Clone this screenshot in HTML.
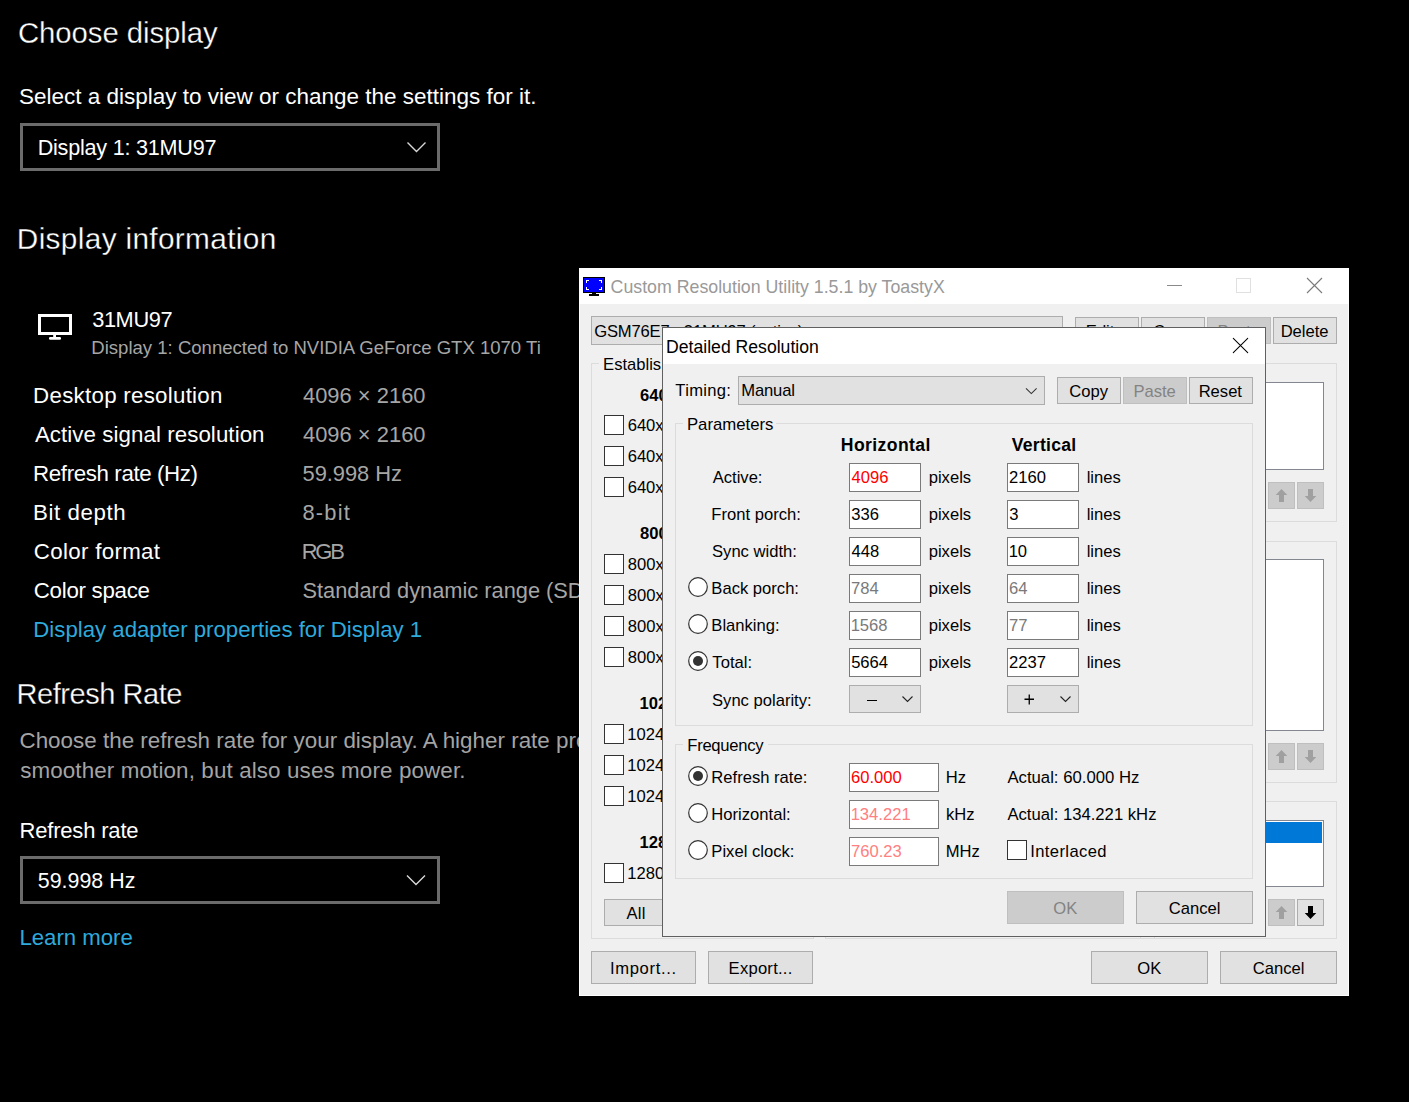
<!DOCTYPE html>
<html><head><meta charset="utf-8"><title>Display settings</title>
<style>
html,body{margin:0;padding:0;}
body{width:1409px;height:1102px;background:#000;position:relative;overflow:hidden;font-family:"Liberation Sans",sans-serif;}
.t{position:absolute;white-space:pre;}
.r{position:absolute;}
</style></head><body>
<div class="t" style="left:17.93px;top:18px;font-size:29.30px;line-height:29.30px;color:#ffffff;font-weight:400;-webkit-text-stroke:0.3px #000;letter-spacing:-0.044px;">Choose display</div>
<div class="t" style="left:19.10px;top:86px;font-size:22.49px;line-height:22.49px;color:#ffffff;font-weight:400;">Select a display to view or change the settings for it.</div>
<div class="r" style="left:20px;top:123px;width:420px;height:48px;border:3px solid #6b6b6b;box-sizing:border-box;"></div>
<div class="t" style="left:37.67px;top:137px;font-size:21.60px;line-height:21.60px;color:#ffffff;font-weight:400;letter-spacing:-0.229px;">Display 1: 31MU97</div>
<svg class="r" style="left:404px;top:139px" width="24" height="16"><polyline points="3.5,3.5 12.5,12.5 21.5,3.5" fill="none" stroke="#d8d8d8" stroke-width="1.4"/></svg>
<div class="t" style="left:16.82px;top:224px;font-size:29.80px;line-height:29.80px;color:#ffffff;font-weight:400;-webkit-text-stroke:0.3px #000;letter-spacing:0.336px;">Display information</div>
<svg class="r" style="left:38px;top:314px" width="36" height="28"><path d="M0 0 H34 V21 H0 Z M3 3 V18 H31 V3 Z" fill="#fff" fill-rule="evenodd"/><rect x="15.2" y="20.5" width="2.8" height="3" fill="#fff"/><rect x="11" y="23.1" width="12" height="2.6" rx="1.2" fill="#fff"/></svg>
<div class="t" style="left:92.15px;top:309px;font-size:21.80px;line-height:21.80px;color:#ffffff;font-weight:400;letter-spacing:-0.388px;">31MU97</div>
<div class="t" style="left:91.32px;top:339px;font-size:18.56px;line-height:18.56px;color:#a6a6a6;font-weight:400;">Display 1: Connected to NVIDIA GeForce GTX 1070 Ti</div>
<div class="t" style="left:33.12px;top:385px;font-size:22.30px;line-height:22.30px;color:#ffffff;font-weight:400;letter-spacing:0.273px;">Desktop resolution</div>
<div class="t" style="left:302.96px;top:385px;font-size:21.90px;line-height:21.90px;color:#a6a6a6;font-weight:400;letter-spacing:0.023px;">4096 × 2160</div>
<div class="t" style="left:34.90px;top:424px;font-size:22.30px;line-height:22.30px;color:#ffffff;font-weight:400;letter-spacing:0.069px;">Active signal resolution</div>
<div class="t" style="left:302.96px;top:424px;font-size:21.90px;line-height:21.90px;color:#a6a6a6;font-weight:400;letter-spacing:0.023px;">4096 × 2160</div>
<div class="t" style="left:33.12px;top:463px;font-size:22.30px;line-height:22.30px;color:#ffffff;font-weight:400;letter-spacing:-0.378px;">Refresh rate (Hz)</div>
<div class="t" style="left:302.52px;top:463px;font-size:21.90px;line-height:21.90px;color:#a6a6a6;font-weight:400;letter-spacing:-0.060px;">59.998 Hz</div>
<div class="t" style="left:33.12px;top:502px;font-size:22.30px;line-height:22.30px;color:#ffffff;font-weight:400;letter-spacing:0.552px;">Bit depth</div>
<div class="t" style="left:302.52px;top:502px;font-size:21.90px;line-height:21.90px;color:#a6a6a6;font-weight:400;letter-spacing:1.182px;">8-bit</div>
<div class="t" style="left:33.78px;top:541px;font-size:22.30px;line-height:22.30px;color:#ffffff;font-weight:400;letter-spacing:0.326px;">Color format</div>
<div class="t" style="left:301.65px;top:541px;font-size:21.90px;line-height:21.90px;color:#a6a6a6;font-weight:400;letter-spacing:-2.138px;">RGB</div>
<div class="t" style="left:33.78px;top:580px;font-size:22.30px;line-height:22.30px;color:#ffffff;font-weight:400;letter-spacing:-0.277px;">Color space</div>
<div class="t" style="left:302.53px;top:580px;font-size:21.80px;line-height:21.80px;color:#a6a6a6;font-weight:400;">Standard dynamic range (SDR)</div>
<div class="t" style="left:33.32px;top:619px;font-size:22.20px;line-height:22.20px;color:#2eaadc;font-weight:400;letter-spacing:0.008px;">Display adapter properties for Display 1</div>
<div class="t" style="left:16.58px;top:680px;font-size:29.00px;line-height:29.00px;color:#ffffff;font-weight:400;-webkit-text-stroke:0.3px #000;letter-spacing:-0.453px;">Refresh Rate</div>
<div class="t" style="left:19.48px;top:730px;font-size:22.40px;line-height:22.40px;color:#a4a4a4;font-weight:400;letter-spacing:0.01px;">Choose the refresh rate for your display. A higher rate provides</div>
<div class="t" style="left:20.15px;top:760px;font-size:22.40px;line-height:22.40px;color:#a4a4a4;font-weight:400;letter-spacing:0.116px;">smoother motion, but also uses more power.</div>
<div class="t" style="left:19.44px;top:820px;font-size:22.00px;line-height:22.00px;color:#ffffff;font-weight:400;letter-spacing:-0.173px;">Refresh rate</div>
<div class="r" style="left:20px;top:856px;width:420px;height:48px;border:3px solid #6b6b6b;box-sizing:border-box;"></div>
<div class="t" style="left:37.84px;top:871px;font-size:21.40px;line-height:21.40px;color:#ffffff;font-weight:400;">59.998 Hz</div>
<svg class="r" style="left:403px;top:872px" width="24" height="16"><polyline points="4,3.5 13,12.5 22,3.5" fill="none" stroke="#d8d8d8" stroke-width="1.4"/></svg>
<div class="t" style="left:19.42px;top:927px;font-size:22.20px;line-height:22.20px;color:#2eaadc;font-weight:400;letter-spacing:-0.016px;">Learn more</div>
<div class="r" style="left:579px;top:268px;width:770px;height:728px;background:#f0f0f0;border:1px solid #fcfcfc;box-sizing:border-box;"></div>
<div class="r" style="left:579px;top:268px;width:770px;height:36px;background:#ffffff;"></div>
<svg class="r" style="left:583px;top:277px" width="23" height="20" shape-rendering="crispEdges"><rect x="0" y="0" width="22" height="16" fill="#000"/><rect x="1" y="1" width="20" height="14" fill="#0000ff"/><g fill="#fff"><rect x="3" y="3" width="3" height="1"/><rect x="3" y="3" width="1" height="3"/><rect x="16" y="3" width="3" height="1"/><rect x="18" y="3" width="1" height="3"/><rect x="3" y="12" width="3" height="1"/><rect x="3" y="10" width="1" height="3"/><rect x="16" y="12" width="3" height="1"/><rect x="18" y="10" width="1" height="3"/></g><rect x="9" y="16" width="4" height="2" fill="#000"/><rect x="6" y="17" width="10" height="2" fill="#000"/></svg>
<div class="t" style="left:610.61px;top:279px;font-size:17.76px;line-height:17.76px;color:#999999;font-weight:400;">Custom Resolution Utility 1.5.1 by ToastyX</div>
<div class="r" style="left:1167px;top:285px;width:15px;height:1px;background:#8a8a8a;"></div>
<div class="r" style="left:1236px;top:278px;width:15px;height:15px;border:1px solid #e0e0e0;box-sizing:border-box;"></div>
<svg class="r" style="left:1306px;top:277px" width="17" height="17"><path d="M1 1 L16 16 M16 1 L1 16" stroke="#7a7a7a" stroke-width="1.1"/></svg>
<div class="r" style="left:591px;top:316px;width:472px;height:29px;background:#e1e1e1;border:1px solid #adadad;box-sizing:border-box;"></div>
<div class="t" style="left:594.17px;top:324px;font-size:16.60px;line-height:16.60px;color:#000;font-weight:400;letter-spacing:-0.158px;">GSM76E7 - 31MU97 (active)</div>
<div class="r" style="left:1075px;top:317px;width:64px;height:27px;background:#e1e1e1;border:1px solid #adadad;box-sizing:border-box;"></div>
<div class="t" style="left:1085.84px;top:324px;font-size:16.60px;line-height:16.60px;color:#000;font-weight:400;">Edit...</div>
<div class="r" style="left:1141px;top:317px;width:64px;height:27px;background:#e1e1e1;border:1px solid #adadad;box-sizing:border-box;"></div>
<div class="t" style="left:1153.21px;top:324px;font-size:16.60px;line-height:16.60px;color:#000;font-weight:400;">Copy</div>
<div class="r" style="left:1207px;top:317px;width:64px;height:27px;background:#cccccc;border:1px solid #bfbfbf;box-sizing:border-box;"></div>
<div class="t" style="left:1217.41px;top:324px;font-size:16.60px;line-height:16.60px;color:#838383;font-weight:400;">Paste</div>
<div class="r" style="left:1273px;top:317px;width:64px;height:27px;background:#e1e1e1;border:1px solid #adadad;box-sizing:border-box;"></div>
<div class="t" style="left:1280.64px;top:324px;font-size:16.60px;line-height:16.60px;color:#000;font-weight:400;">Delete</div>
<div class="r" style="left:591px;top:363px;width:223px;height:576px;border:1px solid #dcdcdc;box-sizing:border-box;"></div>
<div class="r" style="left:825px;top:363px;width:330px;height:576px;border:1px solid #dcdcdc;box-sizing:border-box;"></div>
<div class="r" style="left:599px;top:362px;width:80px;height:3px;background:#f0f0f0;"></div>
<div class="t" style="left:603.07px;top:357px;font-size:16.60px;line-height:16.60px;color:#000;font-weight:400;">Established resolutions</div>
<div class="t" style="left:640.00px;top:388px;font-size:16.60px;line-height:16.60px;color:#000;font-weight:700;">640x480</div>
<div class="r" style="left:604px;top:415px;width:20px;height:20px;background:#fff;border:1px solid #333;box-sizing:border-box;"></div>
<div class="t" style="left:627.67px;top:418px;font-size:16.60px;line-height:16.60px;color:#000;font-weight:400;">640x480 @ 60</div>
<div class="r" style="left:604px;top:446px;width:20px;height:20px;background:#fff;border:1px solid #333;box-sizing:border-box;"></div>
<div class="t" style="left:627.67px;top:449px;font-size:16.60px;line-height:16.60px;color:#000;font-weight:400;">640x480 @ 60</div>
<div class="r" style="left:604px;top:477px;width:20px;height:20px;background:#fff;border:1px solid #333;box-sizing:border-box;"></div>
<div class="t" style="left:627.67px;top:480px;font-size:16.60px;line-height:16.60px;color:#000;font-weight:400;">640x480 @ 60</div>
<div class="t" style="left:640.00px;top:526px;font-size:16.60px;line-height:16.60px;color:#000;font-weight:700;">800x600</div>
<div class="r" style="left:604px;top:554px;width:20px;height:20px;background:#fff;border:1px solid #333;box-sizing:border-box;"></div>
<div class="t" style="left:627.84px;top:557px;font-size:16.60px;line-height:16.60px;color:#000;font-weight:400;">800x600 @ 60</div>
<div class="r" style="left:604px;top:585px;width:20px;height:20px;background:#fff;border:1px solid #333;box-sizing:border-box;"></div>
<div class="t" style="left:627.84px;top:588px;font-size:16.60px;line-height:16.60px;color:#000;font-weight:400;">800x600 @ 60</div>
<div class="r" style="left:604px;top:616px;width:20px;height:20px;background:#fff;border:1px solid #333;box-sizing:border-box;"></div>
<div class="t" style="left:627.84px;top:619px;font-size:16.60px;line-height:16.60px;color:#000;font-weight:400;">800x600 @ 60</div>
<div class="r" style="left:604px;top:647px;width:20px;height:20px;background:#fff;border:1px solid #333;box-sizing:border-box;"></div>
<div class="t" style="left:627.84px;top:650px;font-size:16.60px;line-height:16.60px;color:#000;font-weight:400;">800x600 @ 60</div>
<div class="t" style="left:639.50px;top:696px;font-size:16.60px;line-height:16.60px;color:#000;font-weight:700;">1024x768</div>
<div class="r" style="left:604px;top:724px;width:20px;height:20px;background:#fff;border:1px solid #333;box-sizing:border-box;"></div>
<div class="t" style="left:627.34px;top:727px;font-size:16.60px;line-height:16.60px;color:#000;font-weight:400;">1024x768 @ 60</div>
<div class="r" style="left:604px;top:755px;width:20px;height:20px;background:#fff;border:1px solid #333;box-sizing:border-box;"></div>
<div class="t" style="left:627.34px;top:758px;font-size:16.60px;line-height:16.60px;color:#000;font-weight:400;">1024x768 @ 60</div>
<div class="r" style="left:604px;top:786px;width:20px;height:20px;background:#fff;border:1px solid #333;box-sizing:border-box;"></div>
<div class="t" style="left:627.34px;top:789px;font-size:16.60px;line-height:16.60px;color:#000;font-weight:400;">1024x768 @ 60</div>
<div class="t" style="left:639.50px;top:835px;font-size:16.60px;line-height:16.60px;color:#000;font-weight:700;">1280x1024</div>
<div class="r" style="left:604px;top:863px;width:20px;height:20px;background:#fff;border:1px solid #333;box-sizing:border-box;"></div>
<div class="t" style="left:627.34px;top:866px;font-size:16.60px;line-height:16.60px;color:#000;font-weight:400;">1280x1024 @ 60</div>
<div class="r" style="left:604px;top:899px;width:68px;height:27px;background:#e1e1e1;border:1px solid #adadad;box-sizing:border-box;"></div>
<div class="t" style="left:626.40px;top:906px;font-size:16.60px;line-height:16.60px;color:#000;font-weight:400;letter-spacing:0.242px;">All</div>
<div class="r" style="left:1140px;top:363px;width:197px;height:159px;border:1px solid #dcdcdc;box-sizing:border-box;"></div>
<div class="r" style="left:1140px;top:382px;width:184px;height:88px;background:#fff;border:1px solid #828790;box-sizing:border-box;"></div>
<div class="r" style="left:1268px;top:482px;width:27px;height:27px;background:#cccccc;border:1px solid #bfbfbf;box-sizing:border-box;"><svg width="27" height="27" style="position:absolute;left:-1px;top:-1px"><path d="M13.5 7 L19.3 13 H16 V20 H11 V13 H7.7 Z" fill="#a0a0a0"/></svg></div>
<div class="r" style="left:1297px;top:482px;width:27px;height:27px;background:#cccccc;border:1px solid #bfbfbf;box-sizing:border-box;"><svg width="27" height="27" style="position:absolute;left:-1px;top:-1px"><path d="M11 7 H16 V14 H19.3 L13.5 20 L7.7 14 H11 Z" fill="#a0a0a0"/></svg></div>
<div class="r" style="left:1140px;top:541px;width:197px;height:242px;border:1px solid #dcdcdc;box-sizing:border-box;"></div>
<div class="r" style="left:1140px;top:559px;width:184px;height:172px;background:#fff;border:1px solid #828790;box-sizing:border-box;"></div>
<div class="r" style="left:1268px;top:743px;width:27px;height:27px;background:#cccccc;border:1px solid #bfbfbf;box-sizing:border-box;"><svg width="27" height="27" style="position:absolute;left:-1px;top:-1px"><path d="M13.5 7 L19.3 13 H16 V20 H11 V13 H7.7 Z" fill="#a0a0a0"/></svg></div>
<div class="r" style="left:1297px;top:743px;width:27px;height:27px;background:#cccccc;border:1px solid #bfbfbf;box-sizing:border-box;"><svg width="27" height="27" style="position:absolute;left:-1px;top:-1px"><path d="M11 7 H16 V14 H19.3 L13.5 20 L7.7 14 H11 Z" fill="#a0a0a0"/></svg></div>
<div class="r" style="left:1140px;top:801px;width:197px;height:138px;border:1px solid #dcdcdc;box-sizing:border-box;"></div>
<div class="r" style="left:1140px;top:820px;width:184px;height:67px;background:#fff;border:1px solid #828790;box-sizing:border-box;"></div>
<div class="r" style="left:1268px;top:899px;width:27px;height:27px;background:#cccccc;border:1px solid #bfbfbf;box-sizing:border-box;"><svg width="27" height="27" style="position:absolute;left:-1px;top:-1px"><path d="M13.5 7 L19.3 13 H16 V20 H11 V13 H7.7 Z" fill="#a0a0a0"/></svg></div>
<div class="r" style="left:1297px;top:899px;width:27px;height:27px;background:#e1e1e1;border:1px solid #adadad;box-sizing:border-box;"><svg width="27" height="27" style="position:absolute;left:-1px;top:-1px"><path d="M11 7 H16 V14 H19.3 L13.5 20 L7.7 14 H11 Z" fill="#000"/></svg></div>
<div class="r" style="left:1141px;top:822px;width:181px;height:21px;background:#0078d7;"></div>
<div class="r" style="left:591px;top:951px;width:105px;height:33px;background:#e1e1e1;border:1px solid #adadad;box-sizing:border-box;"></div>
<div class="t" style="left:609.91px;top:961px;font-size:16.60px;line-height:16.60px;color:#000;font-weight:400;letter-spacing:0.671px;">Import...</div>
<div class="r" style="left:708px;top:951px;width:105px;height:33px;background:#e1e1e1;border:1px solid #adadad;box-sizing:border-box;"></div>
<div class="t" style="left:728.57px;top:961px;font-size:16.60px;line-height:16.60px;color:#000;font-weight:400;letter-spacing:0.247px;">Export...</div>
<div class="r" style="left:1091px;top:951px;width:117px;height:33px;background:#e1e1e1;border:1px solid #adadad;box-sizing:border-box;"></div>
<div class="t" style="left:1137.23px;top:961px;font-size:16.60px;line-height:16.60px;color:#000;font-weight:400;">OK</div>
<div class="r" style="left:1220px;top:951px;width:117px;height:33px;background:#e1e1e1;border:1px solid #adadad;box-sizing:border-box;"></div>
<div class="t" style="left:1252.76px;top:961px;font-size:16.60px;line-height:16.60px;color:#000;font-weight:400;">Cancel</div>
<div class="r" style="left:662px;top:327px;width:604px;height:610px;background:#f0f0f0;border:1px solid #606060;box-sizing:border-box;"></div>
<div class="r" style="left:663px;top:328px;width:602px;height:36px;background:#fff;"></div>
<div class="t" style="left:666.09px;top:339px;font-size:17.63px;line-height:17.63px;color:#000;font-weight:400;">Detailed Resolution</div>
<svg class="r" style="left:1232px;top:337px" width="17" height="17"><path d="M1.3 1.3 L15.7 15.7 M15.7 1.3 L1.3 15.7" stroke="#000" stroke-width="1.05" stroke-linecap="round"/></svg>
<div class="t" style="left:675.37px;top:383px;font-size:16.60px;line-height:16.60px;color:#000;font-weight:400;letter-spacing:0.281px;">Timing:</div>
<div class="r" style="left:738px;top:376px;width:307px;height:29px;background:#e1e1e1;border:1px solid #adadad;box-sizing:border-box;"></div>
<div class="t" style="left:741.27px;top:383px;font-size:16.60px;line-height:16.60px;color:#000;font-weight:400;letter-spacing:-0.157px;">Manual</div>
<svg class="r" style="left:1024px;top:385px" width="14" height="11"><polyline points="2,3.3 7.3,8.5 12.6,3.3" fill="none" stroke="#333" stroke-width="1.05"/></svg>
<div class="r" style="left:1057px;top:377px;width:64px;height:27px;background:#e1e1e1;border:1px solid #adadad;box-sizing:border-box;"></div>
<div class="t" style="left:1069.21px;top:384px;font-size:16.60px;line-height:16.60px;color:#000;font-weight:400;">Copy</div>
<div class="r" style="left:1123px;top:377px;width:64px;height:27px;background:#cccccc;border:1px solid #bfbfbf;box-sizing:border-box;"></div>
<div class="t" style="left:1133.41px;top:384px;font-size:16.60px;line-height:16.60px;color:#838383;font-weight:400;">Paste</div>
<div class="r" style="left:1189px;top:377px;width:64px;height:27px;background:#e1e1e1;border:1px solid #adadad;box-sizing:border-box;"></div>
<div class="t" style="left:1198.64px;top:384px;font-size:16.60px;line-height:16.60px;color:#000;font-weight:400;">Reset</div>
<div class="r" style="left:675px;top:423px;width:578px;height:303px;border:1px solid #dcdcdc;box-sizing:border-box;"></div>
<div class="r" style="left:683px;top:422px;width:93px;height:3px;background:#f0f0f0;"></div>
<div class="t" style="left:686.96px;top:417px;font-size:16.74px;line-height:16.74px;color:#000;font-weight:400;">Parameters</div>
<div class="t" style="left:840.84px;top:437px;font-size:17.60px;line-height:17.60px;color:#000;font-weight:700;letter-spacing:0.401px;">Horizontal</div>
<div class="t" style="left:1011.70px;top:437px;font-size:17.60px;line-height:17.60px;color:#000;font-weight:700;letter-spacing:0.267px;">Vertical</div>
<div class="t" style="left:712.70px;top:470px;font-size:16.60px;line-height:16.60px;color:#000;font-weight:400;">Active:</div>
<div class="r" style="left:849px;top:463px;width:72px;height:29px;background:#fff;border:1px solid #7a7a7a;box-sizing:border-box;"></div>
<div class="t" style="left:851.47px;top:470px;font-size:16.60px;line-height:16.60px;color:#ff0000;font-weight:400;">4096</div>
<div class="t" style="left:928.70px;top:470px;font-size:16.60px;line-height:16.60px;color:#000;font-weight:400;">pixels</div>
<div class="r" style="left:1007px;top:463px;width:72px;height:29px;background:#fff;border:1px solid #7a7a7a;box-sizing:border-box;"></div>
<div class="t" style="left:1008.97px;top:470px;font-size:16.60px;line-height:16.60px;color:#000;font-weight:400;">2160</div>
<div class="t" style="left:1086.70px;top:470px;font-size:16.60px;line-height:16.60px;color:#000;font-weight:400;">lines</div>
<div class="t" style="left:711.37px;top:507px;font-size:16.60px;line-height:16.60px;color:#000;font-weight:400;">Front porch:</div>
<div class="r" style="left:849px;top:500px;width:72px;height:29px;background:#fff;border:1px solid #7a7a7a;box-sizing:border-box;"></div>
<div class="t" style="left:851.30px;top:507px;font-size:16.60px;line-height:16.60px;color:#000;font-weight:400;">336</div>
<div class="t" style="left:928.70px;top:507px;font-size:16.60px;line-height:16.60px;color:#000;font-weight:400;">pixels</div>
<div class="r" style="left:1007px;top:500px;width:72px;height:29px;background:#fff;border:1px solid #7a7a7a;box-sizing:border-box;"></div>
<div class="t" style="left:1009.30px;top:507px;font-size:16.60px;line-height:16.60px;color:#000;font-weight:400;">3</div>
<div class="t" style="left:1086.70px;top:507px;font-size:16.60px;line-height:16.60px;color:#000;font-weight:400;">lines</div>
<div class="t" style="left:712.04px;top:544px;font-size:16.60px;line-height:16.60px;color:#000;font-weight:400;">Sync width:</div>
<div class="r" style="left:849px;top:537px;width:72px;height:29px;background:#fff;border:1px solid #7a7a7a;box-sizing:border-box;"></div>
<div class="t" style="left:851.47px;top:544px;font-size:16.60px;line-height:16.60px;color:#000;font-weight:400;">448</div>
<div class="t" style="left:928.70px;top:544px;font-size:16.60px;line-height:16.60px;color:#000;font-weight:400;">pixels</div>
<div class="r" style="left:1007px;top:537px;width:72px;height:29px;background:#fff;border:1px solid #7a7a7a;box-sizing:border-box;"></div>
<div class="t" style="left:1008.64px;top:544px;font-size:16.60px;line-height:16.60px;color:#000;font-weight:400;">10</div>
<div class="t" style="left:1086.70px;top:544px;font-size:16.60px;line-height:16.60px;color:#000;font-weight:400;">lines</div>
<svg class="r" style="left:688px;top:577px" width="20" height="20"><circle cx="10" cy="10" r="9.3" fill="#fff" stroke="#333" stroke-width="1.2"/></svg>
<div class="t" style="left:711.37px;top:581px;font-size:16.60px;line-height:16.60px;color:#000;font-weight:400;">Back porch:</div>
<div class="r" style="left:849px;top:574px;width:72px;height:29px;background:#fff;border:1px solid #7a7a7a;box-sizing:border-box;"></div>
<div class="t" style="left:850.97px;top:581px;font-size:16.60px;line-height:16.60px;color:#7a7a7a;font-weight:400;">784</div>
<div class="t" style="left:928.70px;top:581px;font-size:16.60px;line-height:16.60px;color:#000;font-weight:400;">pixels</div>
<div class="r" style="left:1007px;top:574px;width:72px;height:29px;background:#fff;border:1px solid #7a7a7a;box-sizing:border-box;"></div>
<div class="t" style="left:1008.97px;top:581px;font-size:16.60px;line-height:16.60px;color:#7a7a7a;font-weight:400;">64</div>
<div class="t" style="left:1086.70px;top:581px;font-size:16.60px;line-height:16.60px;color:#000;font-weight:400;">lines</div>
<svg class="r" style="left:688px;top:614px" width="20" height="20"><circle cx="10" cy="10" r="9.3" fill="#fff" stroke="#333" stroke-width="1.2"/></svg>
<div class="t" style="left:711.37px;top:618px;font-size:16.60px;line-height:16.60px;color:#000;font-weight:400;">Blanking:</div>
<div class="r" style="left:849px;top:611px;width:72px;height:29px;background:#fff;border:1px solid #7a7a7a;box-sizing:border-box;"></div>
<div class="t" style="left:850.64px;top:618px;font-size:16.60px;line-height:16.60px;color:#7a7a7a;font-weight:400;">1568</div>
<div class="t" style="left:928.70px;top:618px;font-size:16.60px;line-height:16.60px;color:#000;font-weight:400;">pixels</div>
<div class="r" style="left:1007px;top:611px;width:72px;height:29px;background:#fff;border:1px solid #7a7a7a;box-sizing:border-box;"></div>
<div class="t" style="left:1008.97px;top:618px;font-size:16.60px;line-height:16.60px;color:#7a7a7a;font-weight:400;">77</div>
<div class="t" style="left:1086.70px;top:618px;font-size:16.60px;line-height:16.60px;color:#000;font-weight:400;">lines</div>
<svg class="r" style="left:688px;top:651px" width="20" height="20"><circle cx="10" cy="10" r="9.3" fill="#fff" stroke="#333" stroke-width="1.2"/><circle cx="10" cy="10" r="5" fill="#333"/></svg>
<div class="t" style="left:712.37px;top:655px;font-size:16.60px;line-height:16.60px;color:#000;font-weight:400;">Total:</div>
<div class="r" style="left:849px;top:648px;width:72px;height:29px;background:#fff;border:1px solid #7a7a7a;box-sizing:border-box;"></div>
<div class="t" style="left:851.14px;top:655px;font-size:16.60px;line-height:16.60px;color:#000;font-weight:400;">5664</div>
<div class="t" style="left:928.70px;top:655px;font-size:16.60px;line-height:16.60px;color:#000;font-weight:400;">pixels</div>
<div class="r" style="left:1007px;top:648px;width:72px;height:29px;background:#fff;border:1px solid #7a7a7a;box-sizing:border-box;"></div>
<div class="t" style="left:1008.97px;top:655px;font-size:16.60px;line-height:16.60px;color:#000;font-weight:400;">2237</div>
<div class="t" style="left:1086.70px;top:655px;font-size:16.60px;line-height:16.60px;color:#000;font-weight:400;">lines</div>
<div class="t" style="left:712.04px;top:693px;font-size:16.60px;line-height:16.60px;color:#000;font-weight:400;">Sync polarity:</div>
<div class="r" style="left:849px;top:685px;width:72px;height:28px;background:#e1e1e1;border:1px solid #adadad;box-sizing:border-box;"></div>
<svg class="r" style="left:901px;top:695px" width="14" height="10"><polyline points="1.5,1.5 6.5,6.5 11.5,1.5" fill="none" stroke="#222" stroke-width="1.1"/></svg>
<div class="r" style="left:1007px;top:685px;width:72px;height:28px;background:#e1e1e1;border:1px solid #adadad;box-sizing:border-box;"></div>
<svg class="r" style="left:1059px;top:695px" width="14" height="10"><polyline points="1.5,1.5 6.5,6.5 11.5,1.5" fill="none" stroke="#222" stroke-width="1.1"/></svg>
<div class="r" style="left:867px;top:699.5px;width:10px;height:1.5px;background:#000;"></div>
<svg class="r" style="left:1024px;top:694px" width="11" height="11"><path d="M5.25 0.5 V10.5 M0.5 5.25 H10" stroke="#000" stroke-width="1.3"/></svg>
<div class="r" style="left:675px;top:744px;width:578px;height:135px;border:1px solid #dcdcdc;box-sizing:border-box;"></div>
<div class="r" style="left:683px;top:743px;width:85px;height:3px;background:#f0f0f0;"></div>
<div class="t" style="left:687.27px;top:738px;font-size:16.60px;line-height:16.60px;color:#000;font-weight:400;letter-spacing:-0.263px;">Frequency</div>
<svg class="r" style="left:688px;top:766px" width="20" height="20"><circle cx="10" cy="10" r="9.3" fill="#fff" stroke="#333" stroke-width="1.2"/><circle cx="10" cy="10" r="5" fill="#333"/></svg>
<div class="t" style="left:711.37px;top:770px;font-size:16.60px;line-height:16.60px;color:#000;font-weight:400;">Refresh rate:</div>
<div class="r" style="left:849px;top:763px;width:90px;height:29px;background:#fff;border:1px solid #7a7a7a;box-sizing:border-box;"></div>
<div class="t" style="left:850.97px;top:770px;font-size:16.60px;line-height:16.60px;color:#ff0000;font-weight:400;">60.000</div>
<div class="t" style="left:945.67px;top:770px;font-size:16.60px;line-height:16.60px;color:#000;font-weight:400;">Hz</div>
<div class="t" style="left:1007.40px;top:770px;font-size:16.73px;line-height:16.73px;color:#000;font-weight:400;">Actual: 60.000 Hz</div>
<svg class="r" style="left:688px;top:803px" width="20" height="20"><circle cx="10" cy="10" r="9.3" fill="#fff" stroke="#333" stroke-width="1.2"/></svg>
<div class="t" style="left:711.37px;top:807px;font-size:16.60px;line-height:16.60px;color:#000;font-weight:400;">Horizontal:</div>
<div class="r" style="left:849px;top:800px;width:90px;height:29px;background:#fff;border:1px solid #7a7a7a;box-sizing:border-box;"></div>
<div class="t" style="left:850.64px;top:807px;font-size:16.60px;line-height:16.60px;color:#ff8080;font-weight:400;">134.221</div>
<div class="t" style="left:946.00px;top:807px;font-size:16.60px;line-height:16.60px;color:#000;font-weight:400;">kHz</div>
<div class="t" style="left:1007.40px;top:807px;font-size:16.67px;line-height:16.67px;color:#000;font-weight:400;">Actual: 134.221 kHz</div>
<svg class="r" style="left:688px;top:840px" width="20" height="20"><circle cx="10" cy="10" r="9.3" fill="#fff" stroke="#333" stroke-width="1.2"/></svg>
<div class="t" style="left:711.37px;top:844px;font-size:16.60px;line-height:16.60px;color:#000;font-weight:400;">Pixel clock:</div>
<div class="r" style="left:849px;top:837px;width:90px;height:29px;background:#fff;border:1px solid #7a7a7a;box-sizing:border-box;"></div>
<div class="t" style="left:850.97px;top:844px;font-size:16.60px;line-height:16.60px;color:#ff8080;font-weight:400;">760.23</div>
<div class="t" style="left:945.67px;top:844px;font-size:16.60px;line-height:16.60px;color:#000;font-weight:400;">MHz</div>
<div class="r" style="left:1007px;top:840px;width:20px;height:20px;background:#fff;border:1px solid #333;box-sizing:border-box;"></div>
<div class="t" style="left:1030.21px;top:844px;font-size:16.60px;line-height:16.60px;color:#000;font-weight:400;letter-spacing:0.381px;">Interlaced</div>
<div class="r" style="left:1007px;top:891px;width:117px;height:33px;background:#cccccc;border:1px solid #bfbfbf;box-sizing:border-box;"></div>
<div class="t" style="left:1053.23px;top:901px;font-size:16.60px;line-height:16.60px;color:#838383;font-weight:400;">OK</div>
<div class="r" style="left:1136px;top:891px;width:117px;height:33px;background:#e1e1e1;border:1px solid #adadad;box-sizing:border-box;"></div>
<div class="t" style="left:1168.76px;top:901px;font-size:16.60px;line-height:16.60px;color:#000;font-weight:400;">Cancel</div>
</body></html>
